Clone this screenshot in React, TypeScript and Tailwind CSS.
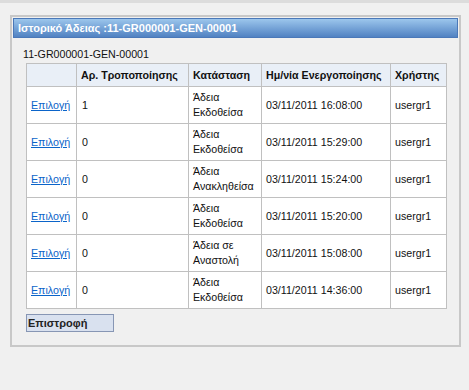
const rows = [
  { rev: "1", state: ["Άδεια", "Εκδοθείσα"], date: "03/11/2011 16:08:00", user: "usergr1" },
  { rev: "0", state: ["Άδεια", "Εκδοθείσα"], date: "03/11/2011 15:29:00", user: "usergr1" },
  { rev: "0", state: ["Άδεια", "Ανακληθείσα"], date: "03/11/2011 15:24:00", user: "usergr1" },
  { rev: "0", state: ["Άδεια", "Εκδοθείσα"], date: "03/11/2011 15:20:00", user: "usergr1" },
  { rev: "0", state: ["Άδεια σε", "Αναστολή"], date: "03/11/2011 15:08:00", user: "usergr1" },
  { rev: "0", state: ["Άδεια", "Εκδοθείσα"], date: "03/11/2011 14:36:00", user: "usergr1" },
];

export default function App() {
  return (
    <div className="w-[469px] h-[390px] bg-[#f0f0f0] font-['Liberation_Sans',Arial,sans-serif] text-[10.67px] text-[#111] overflow-hidden">
      <div className="h-[3px] bg-[#dcdcdc]"></div>
      <div className="ml-[10px] mt-[12px] w-[451px] h-[332px] border-2 border-[#c8c8c8] p-px">
        {/* title bar */}
        <div className="h-[20px] border border-[#4a78b8] bg-gradient-to-b from-[#9cc6ec] to-[#5182c2] text-white font-bold text-[11px] leading-[18px] pl-[4px]">
          Ιστορικό Άδειας :11-GR000001-GEN-00001
        </div>

        <div className="pl-[10px] pt-[9px]">
          <div className="h-[16px] leading-[14px]">11-GR000001-GEN-00001</div>
          <table className="ml-[3px] w-[420px] border-collapse bg-white table-fixed">
            <colgroup>
              <col className="w-[50px]" />
              <col className="w-[112px]" />
              <col className="w-[73px]" />
              <col className="w-[129px]" />
              <col className="w-[56px]" />
            </colgroup>
            <thead>
              <tr className="h-[23px] bg-[#e9eff7]">
                <th className="border border-[#c0c0c0]"></th>
                <th className="border border-[#c0c0c0] text-left font-bold pl-[4px]">Αρ. Τροποποίησης</th>
                <th className="border border-[#c0c0c0] text-left font-bold pl-[4px]">Κατάσταση</th>
                <th className="border border-[#c0c0c0] text-left font-bold pl-[4px]">Ημ/νία Ενεργοποίησης</th>
                <th className="border border-[#c0c0c0] text-left font-bold pl-[4px]">Χρήστης</th>
              </tr>
            </thead>
            <tbody>
              {rows.map((r, i) => (
                <tr key={i} className="h-[37px]">
                  <td className="border border-[#c0c0c0] pl-[4px]">
                    <a href="#" className="text-[#0b64c9] underline">Επιλογή</a>
                  </td>
                  <td className="border border-[#c0c0c0] pl-[5px]">{r.rev}</td>
                  <td className="border border-[#c0c0c0] pl-[4px] leading-[15px]">
                    {r.state[0]}
                    <br />
                    {r.state[1]}
                  </td>
                  <td className="border border-[#c0c0c0] pl-[4px]">{r.date}</td>
                  <td className="border border-[#c0c0c0] pl-[4px]">{r.user}</td>
                </tr>
              ))}
            </tbody>
          </table>
          <button className="block ml-[3px] mt-[5px] w-[88px] h-[18px] bg-[#d9e1ef] border border-[#8796b4] text-left pl-px font-bold text-[#222] text-[11px] leading-[16px]">
            Επιστροφή
          </button>
        </div>
      </div>
    </div>
  );
}
